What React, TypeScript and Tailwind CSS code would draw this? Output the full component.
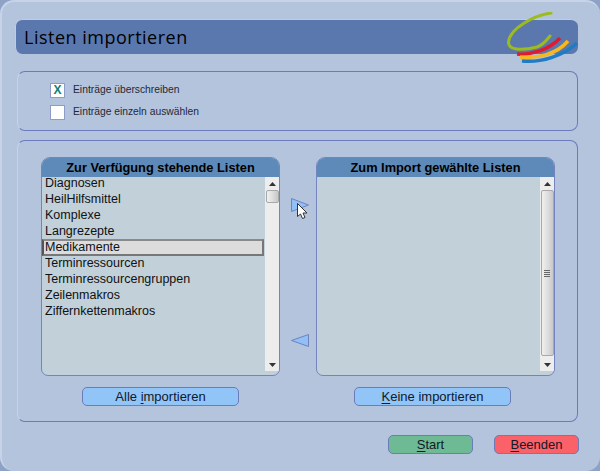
import React from "react";

const items = ["Diagnosen","HeilHilfsmittel","Komplexe","Langrezepte","Medikamente","Terminressourcen","Terminressourcengruppen","Zeilenmakros","Ziffernkettenmakros"];

function U({ children }: { children: React.ReactNode }) {
  return <span className="underline underline-offset-2">{children}</span>;
}

function Arrow({ dir }: { dir: "up" | "down" }) {
  return (
    <div className="h-[13px] w-[14px] flex items-center justify-center">
      <svg width="7" height="4" viewBox="0 0 7 4">
        <path d={dir === "up" ? "M3.5 0L7 4H0Z" : "M0 0H7L3.5 4Z"} fill="#333" />
      </svg>
    </div>
  );
}

function Thumb({ className, grip }: { className: string; grip?: boolean }) {
  return (
    <div className={`mx-auto w-[13px] border border-[#a8a8a8] rounded-[2px] bg-gradient-to-r from-[#f0f0f0] via-[#dedede] to-[#c8c8c8] flex flex-col items-center justify-center gap-[1px] ${className}`}>
      {grip && (
        <>
          <div className="w-[6px] h-[1px] bg-[#666]" />
          <div className="w-[6px] h-[1px] bg-[#666]" />
          <div className="w-[6px] h-[1px] bg-[#666]" />
          <div className="w-[6px] h-[1px] bg-[#666]" />
        </>
      )}
    </div>
  );
}

function ListPanel({ title, children, scroll }: { title: string; children?: React.ReactNode; scroll: React.ReactNode }) {
  return (
    <div className="w-[239px] h-[219px] flex flex-col rounded-tl-[9px] rounded-tr-[9px] rounded-bl-[7px] rounded-br-[7px] border border-[#7484c0] overflow-hidden bg-[#c1d0d9]">
      <div className="h-[19px] shrink-0 bg-[#5d8ab8] flex items-center justify-center font-bold text-[12.8px] text-black">{title}</div>
      <div className="flex-1 flex min-h-0">
        <div className="flex-1 min-w-0 -mt-[2px] pr-[1px]">{children}</div>
        <div className="w-[14px] mb-[4px] bg-[#ededed] flex flex-col items-center justify-between">{scroll}</div>
      </div>
    </div>
  );
}

function Btn({ children, className }: { children: React.ReactNode; className: string }) {
  return (
    <div className={`h-[19px] rounded-[5px] border border-[#6b7cb8] flex items-center justify-center text-[13px] text-[#111827] ${className}`}>
      <span>{children}</span>
    </div>
  );
}

function Check({ label, checked }: { label: string; checked?: boolean }) {
  return (
    <div className="flex items-center h-[22px]">
      <div className="w-[15px] h-[15px] bg-white border border-[#8d9cc8] flex items-center justify-center text-[#0f7f7a] font-bold text-[12px] leading-none">{checked ? "X" : ""}</div>
      <span className="ml-[8px] text-[10.3px] text-[#1f2937]">{label}</span>
    </div>
  );
}

export default function App() {
  return (
    <div className="w-[600px] h-[471px] bg-[#8ea2c8] overflow-hidden" style={{ fontFamily: '"Liberation Sans", Arial, sans-serif' }}>
      <div className="w-[600px] h-[471px] bg-[#b5c4dd] rounded-[14px] border-t-[2px] border-l-[2px] border-t-[#c7d3e6] border-l-[#c7d3e6] pl-[13px] pt-[17px] relative">
        <div className="w-[563px] h-[35px] bg-[#5a78ae] rounded-[7px] border-t border-l border-[#c0cce4] flex items-center pl-[8px]">
          <span className="text-[18px] font-medium text-black tracking-[0.5px]" style={{ fontFamily: '"Comic Sans MS", "Open Sans", sans-serif' }}>Listen importieren</span>
        </div>
        <svg className="absolute left-[505px] top-[10px]" width="72" height="52" viewBox="0 0 72 52" fill="none">
          <path d="M44 1C28 3 3 16 1.5 30C1 38 14 39 30 35C36 33 40 28 43 24" stroke="#9bbb1e" strokeWidth="3" strokeLinecap="round" />
          <path d="M10 42C24 43 42 38 53 26" stroke="#e01b2e" strokeWidth="3.5" />
          <path d="M13 45C30 47 50 42 61 29" stroke="#f7b71d" strokeWidth="3.5" />
          <path d="M15 49C34 51 56 44 70 31" stroke="#1f7cc4" strokeWidth="3.5" />
        </svg>

        <div className="mt-[17px] ml-[2px] w-[561px] h-[60px] border border-[#6a7bbd] border-l-[#c7d3e6] rounded-[8px] pl-[32px] pt-[7px]">
          <Check label="Einträge überschreiben" checked />
          <Check label="Einträge einzeln auswählen" />
        </div>

        <div className="mt-[9px] ml-[2px] w-[561px] h-[282px] border border-[#6a7bbd] border-l-[#c7d3e6] rounded-[8px] pl-[23px] pt-[16px]">
          <div className="flex">
            <ListPanel
              title="Zur Verfügung stehende Listen"
              scroll={<><div><Arrow dir="up" /><Thumb className="h-[13px]" /></div><Arrow dir="down" /></>}
            >
              {items.map((it) =>
                it === "Medikamente" ? (
                  <div key={it} className="h-[17px] -my-[0.5px] border-2 border-t-[#8a8a8a] border-l-[#555] border-r-[#777] border-b-[#777] bg-[#dcdcdc] pl-[1px] text-[12.5px] leading-[13px] text-[#111]">{it}</div>
                ) : (
                  <div key={it} className="h-[16px] pl-[3px] text-[12.5px] leading-[16px] text-[#111]">{it}</div>
                )
              )}
            </ListPanel>
            <div className="w-[36px] flex flex-col items-center pt-[41px] pl-[3px]">
              <div className="relative">
                <svg width="18" height="14" viewBox="0 0 18 14">
                  <path d="M.5.5L17.5 7L.5 13.5Z" fill="#90c0f5" stroke="#6f82bf" />
                </svg>
                <svg className="absolute left-[6px] top-[5px]" width="11" height="17" viewBox="0 0 11 17">
                  <path d="M.5.5V13.5L3.5 11L5.5 15.5L8 14.5L6 10H10Z" fill="#fff" stroke="#333" strokeWidth="1" />
                </svg>
              </div>
              <svg className="mt-[122px]" width="18" height="13" viewBox="0 0 18 13">
                <path d="M17.5.5L.5 6.5L17.5 12.5Z" fill="#90c0f5" stroke="#6f82bf" />
              </svg>
            </div>
            <ListPanel
              title="Zum Import gewählte Listen"
              scroll={<><Arrow dir="up" /><Thumb grip className="flex-1 mb-[2px]" /><Arrow dir="down" /></>}
            />
          </div>
          <div className="flex mt-[11px]">
            <Btn className="w-[157px] ml-[41px] bg-[#92c5f7]">Alle <U>i</U>mportieren</Btn>
            <Btn className="w-[157px] ml-[115px] bg-[#92c5f7]"><U>K</U>eine importieren</Btn>
          </div>
        </div>

        <div className="flex mt-[13px] ml-[373px] gap-[21px]">
          <Btn className="w-[85px] bg-[#6dba95]"><U>S</U>tart</Btn>
          <Btn className="w-[85px] bg-[#fb6168]"><U>B</U>eenden</Btn>
        </div>
      </div>
    </div>
  );
}
